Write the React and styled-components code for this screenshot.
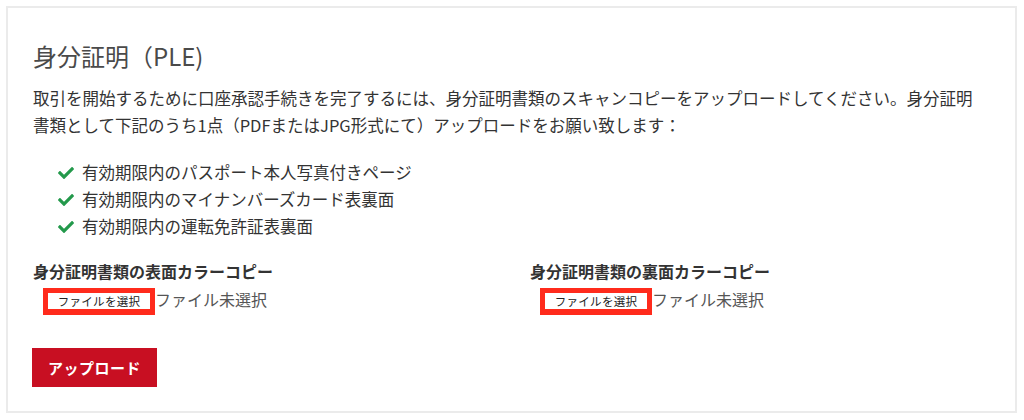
import React from "react";
import styled, { createGlobalStyle } from "styled-components";
import { FaCheck } from "react-icons/fa";

const Global = createGlobalStyle`
  html, body { margin: 0; padding: 0; background: #fff; }
  body {
    font-family: "Noto Sans CJK JP", "Noto Sans", "Liberation Sans", sans-serif;
    color: #333;
  }
  * { box-sizing: border-box; }
`;

const Card = styled.section`
  margin: 6px;
  width: 1011px;
  height: 407px;
  border: 2px solid #ebebeb;
  padding: 33px 32px 0 25px;
  background: #fff;
`;

const Title = styled.h2`
  margin: 0 0 14px;
  font-size: 24px;
  line-height: 30px;
  font-weight: 400;
  color: #4a4a4a;
`;

const Lead = styled.p`
  margin: 0;
  font-size: 16.5px;
  line-height: 26.5px;
  color: #333;
`;

const CheckList = styled.ul`
  list-style: none;
  margin: 21px 0 0;
  padding: 0 0 0 25px;
`;

const CheckItem = styled.li`
  display: flex;
  align-items: center;
  gap: 8px;
  font-size: 16.5px;
  line-height: 27px;
  color: #333;
  svg {
    color: #23994b;
    width: 16px;
    height: 16px;
    flex: none;
  }
`;

const Uploads = styled.div`
  display: grid;
  grid-template-columns: 497px 1fr;
  margin-top: 19px;
`;

const Field = styled.div`
  display: flex;
  flex-direction: column;
`;

const FieldLabel = styled.div`
  font-size: 16px;
  line-height: 24px;
  font-weight: 700;
  color: #333;
`;

const FileRow = styled.div`
  display: flex;
  align-items: flex-start;
  margin: 5px 0 0 10px;
`;

const ChooseButton = styled.span`
  display: inline-flex;
  align-items: center;
  justify-content: center;
  width: 112px;
  height: 27px;
  border: 5px solid #ff2b1c;
  border-bottom-width: 6px;
  background: #fff;
  font-size: 11.5px;
  line-height: 16px;
  color: #222;
  letter-spacing: 0.3px;
`;

const NoFile = styled.span`
  font-size: 16px;
  line-height: 20px;
  color: #555;
  margin-top: 1px;
`;

const UploadButton = styled.button`
  margin-top: 33px;
  margin-left: -1px;
  width: 125px;
  height: 39px;
  border: none;
  background: #c80f22;
  color: #fff;
  font-family: inherit;
  font-size: 15px;
  font-weight: 700;
  letter-spacing: 0.5px;
  cursor: pointer;
`;

const items = [
  "有効期限内のパスポート本人写真付きページ",
  "有効期限内のマイナンバーズカード表裏面",
  "有効期限内の運転免許証表裏面",
];

const fields = ["身分証明書類の表面カラーコピー", "身分証明書類の裏面カラーコピー"];

export default function App() {
  return (
    <>
      <Global />
      <Card>
        <Title>身分証明（PLE)</Title>
        <Lead>
          取引を開始するために口座承認手続きを完了するには、身分証明書類のスキャンコピーをアップロードしてください。身分証明書類として下記のうち1点（PDFまたはJPG形式にて）アップロードをお願い致します：
        </Lead>
        <CheckList>
          {items.map((t) => (
            <CheckItem key={t}>
              <FaCheck />
              {t}
            </CheckItem>
          ))}
        </CheckList>
        <Uploads>
          {fields.map((f) => (
            <Field key={f}>
              <FieldLabel>{f}</FieldLabel>
              <FileRow>
                <ChooseButton>ファイルを選択</ChooseButton>
                <NoFile>ファイル未選択</NoFile>
              </FileRow>
            </Field>
          ))}
        </Uploads>
        <UploadButton>アップロード</UploadButton>
      </Card>
    </>
  );
}
